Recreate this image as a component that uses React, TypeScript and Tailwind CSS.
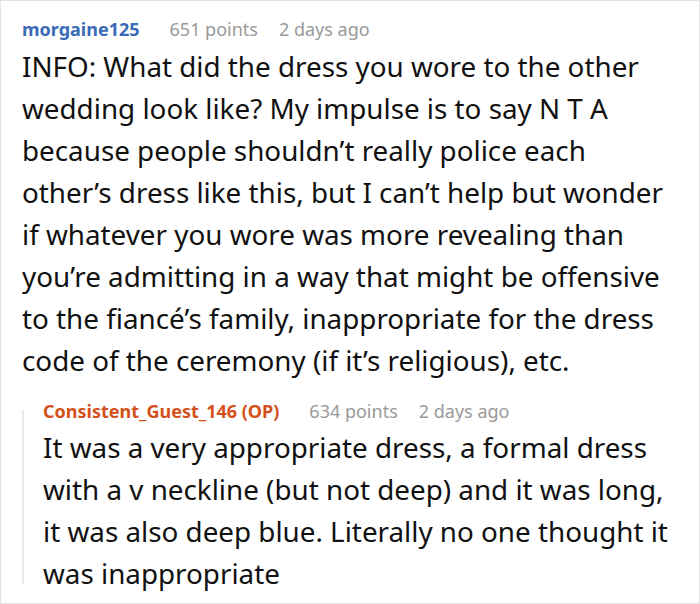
import React from 'react';

type HeaderProps = {
  author: string;
  authorClass: string;
  points: number;
  age: string;
};

const CommentHeader: React.FC<HeaderProps> = ({ author, authorClass, points, age }) => (
  <div className="flex items-baseline text-[18px] leading-[27px] whitespace-nowrap">
    <span className={`font-bold ${authorClass}`}>{author}</span>
    <span className="ml-[30px] text-[#999999]">{points} points</span>
    <span className="ml-[21px] text-[#999999]">{age}</span>
  </div>
);

const CommentBody: React.FC<{ lines: string[]; className?: string }> = ({ lines, className = '' }) => (
  <p className={`text-[27.8px] leading-[42px] whitespace-nowrap ${className}`}>
    {lines.map((line, i) => (
      <span key={i} className="block">
        {line}
      </span>
    ))}
  </p>
);

const parentLines = [
  'INFO: What did the dress you wore to the other',
  'wedding look like? My impulse is to say N T A',
  'because people shouldn’t really police each',
  'other’s dress like this, but I can’t help but wonder',
  'if whatever you wore was more revealing than',
  'you’re admitting in a way that might be offensive',
  'to the fiancé’s family, inappropriate for the dress',
  'code of the ceremony (if it’s religious), etc.',
];

const replyLines = [
  'It was a very appropriate dress, a formal dress',
  'with a v neckline (but not deep) and it was long,',
  'it was also deep blue. Literally no one thought it',
  'was inappropriate',
];

const App: React.FC = () => {
  return (
    <div
      className="w-[700px] h-[604px] bg-white border border-[#e3e3e3] overflow-hidden text-[#111111]"
      style={{ fontFamily: '"Noto Sans", "Open Sans", sans-serif' }}
    >
      <div className="pl-[21px] pt-[15px]">
        <CommentHeader
          author="morgaine125"
          authorClass="text-[#3a6ab8]"
          points={651}
          age="2 days ago"
        />
        <CommentBody lines={parentLines} className="mt-[2px]" />

        <div className="mt-[17px] flex">
          <div className="w-[2px] shrink-0 bg-[#e8e8e8] mt-[12px] mb-[10px]" />
          <div className="pl-[19px]">
            <CommentHeader
              author="Consistent_Guest_146 (OP)"
              authorClass="text-[#d4501b]"
              points={634}
              age="2 days ago"
            />
            <CommentBody lines={replyLines} className="mt-[1px]" />
          </div>
        </div>
      </div>
    </div>
  );
};

export default App;
